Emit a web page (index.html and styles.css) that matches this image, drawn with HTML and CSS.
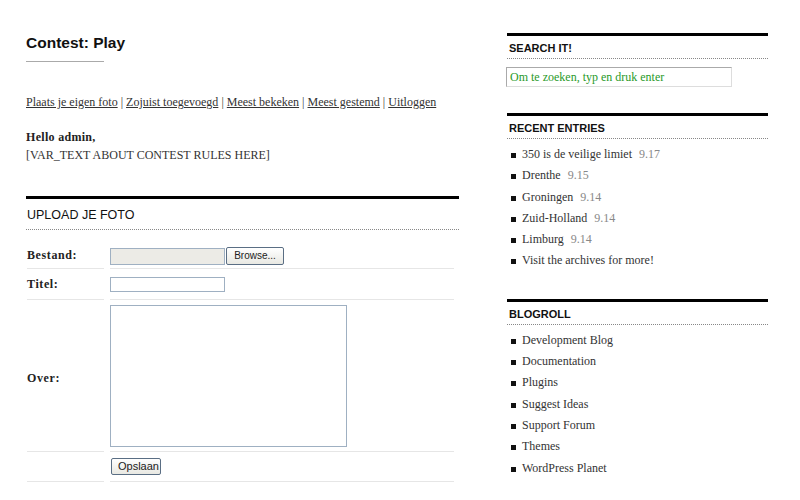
FILE: index.html
```html
<!DOCTYPE html>
<html>
<head>
<meta charset="utf-8">
<link rel="stylesheet" href="styles.css">
</head>
<body>
<div class="page">
  <main class="content">
    <h1 class="title">Contest: Play</h1>
    <p class="nav"><a href="#">Plaats je eigen foto</a> | <a href="#">Zojuist toegevoegd</a> | <a href="#">Meest bekeken</a> | <a href="#">Meest gestemd</a> | <a href="#">Uitloggen</a></p>
    <p class="intro"><strong>Hello admin,</strong><br>[VAR_TEXT ABOUT CONTEST RULES HERE]</p>
    <section class="upload">
      <h2 class="boxhead">UPLOAD JE FOTO</h2>
      <table class="form">
        <tr class="r1"><th>Bestand:</th><td><span class="file"></span><span class="btn browse">Browse...</span></td></tr>
        <tr class="r2"><th>Titel:</th><td><span class="text"></span></td></tr>
        <tr class="r3"><th>Over:</th><td><span class="area"></span></td></tr>
        <tr class="r4"><th></th><td><span class="btn save">Opslaan</span></td></tr>
      </table>
    </section>
  </main>
  <aside class="sidebar">
    <section class="widget">
      <h2 class="boxhead">SEARCH IT!</h2>
      <div class="search">Om te zoeken, typ en druk enter</div>
    </section>
    <section class="widget">
      <h2 class="boxhead">RECENT ENTRIES</h2>
      <ul class="list">
        <li>350 is de veilige limiet <span class="date">9.17</span></li>
        <li>Drenthe <span class="date">9.15</span></li>
        <li>Groningen <span class="date">9.14</span></li>
        <li>Zuid-Holland <span class="date">9.14</span></li>
        <li>Limburg <span class="date">9.14</span></li>
        <li>Visit the archives for more!</li>
      </ul>
    </section>
    <section class="widget">
      <h2 class="boxhead">BLOGROLL</h2>
      <ul class="list">
        <li>Development Blog</li>
        <li>Documentation</li>
        <li>Plugins</li>
        <li>Suggest Ideas</li>
        <li>Support Forum</li>
        <li>Themes</li>
        <li>WordPress Planet</li>
      </ul>
    </section>
  </aside>
</div>
</body>
</html>
```

FILE: styles.css
```css
html, body { margin: 0; padding: 0; background: #fff; }
body {
  font-family: "Liberation Serif", "DejaVu Serif", serif;
  font-size: 12px;
  color: #333;
}
.page {
  display: flex;
  padding-left: 26px;
  gap: 48px;
}
.content { width: 433px; }
.sidebar { width: 261px; padding-top: 33px; }

.title {
  font-family: "Liberation Sans", Arial, sans-serif;
  font-size: 15.5px;
  font-weight: bold;
  color: #111;
  margin: 34px 0 0;
  padding-bottom: 9px;
  width: 78px;
  white-space: nowrap;
  border-bottom: 1px solid #aaa;
}
.nav { margin: 33px 0 0; line-height: 14px; }
.nav a { color: #333; }
.intro { margin: 19px 0 0; line-height: 18px; }
.intro strong { color: #222; letter-spacing: 0.3px; }

.upload { margin-top: 32px; }
.boxhead {
  font-family: "Liberation Sans", Arial, sans-serif;
  font-weight: bold;
  font-size: 11px;
  color: #111;
  margin: 0;
  border-top: 3px solid #000;
  border-bottom: 1px dotted #888;
  padding: 6px 2px 3px;
  line-height: 13px;
}
.upload .boxhead { font-size: 12.5px; font-weight: normal; padding: 9px 1px 7px; line-height: 14px; }

.form { border-collapse: separate; border-spacing: 6px 0; margin: 8px 0 0 -5px; width: 439px; }
.form th, .form td {
  box-sizing: border-box;
  padding: 0;
  border-bottom: 1px solid #e6e6e6;
  vertical-align: middle;
}
.form th {
  width: 77px; text-align: left;
  font-weight: bold; color: #222; font-size: 12px; letter-spacing: 0.6px;
  line-height: 14px;
}
.form span { display: inline-block; vertical-align: middle; box-sizing: border-box; }
.r1 > * { height: 31px; }
.r1 > th, .r1 > td { vertical-align: top; }
.r1 > th { padding-top: 10px; }
.r1 > td { padding-top: 9px; line-height: 14px; }
.r2 > * { height: 31px; }
.r3 > * { height: 152px; }
.r3 > th { padding-top: 5px; }
.r4 > * { height: 30px; }
.file { width: 115px; height: 17px; background: #ecebe6; border: 1px solid #9fb0c2; }
.text { width: 115px; height: 15px; border: 1px solid #9fb0c2; }
.area { width: 237px; height: 142px; border: 1px solid #9fb0c2; margin-top: 1px; }
.btn {
  font-family: "Liberation Sans", Arial, sans-serif;
  font-size: 10px; color: #222;
  border: 1px solid #5a6e84;
  border-radius: 2px;
  background: linear-gradient(#fff, #e8e8e2);
  line-height: 14px;
  padding: 0 6px;
}
.browse { width: 58px; height: 18px; margin-left: 1px; line-height: 16px; text-align: center; }
.save { width: 50px; height: 17px; margin-left: 1px; line-height: 15px; text-align: center; font-size: 11px; }

.widget + .widget { margin-top: 26px; }
.widget:nth-child(3) { margin-top: 27px; }
.search {
  margin: 8px 0 0 -1px;
  width: 226px; height: 20px; box-sizing: border-box;
  border: 1px solid #ddd; border-top-color: #aaa; border-left-color: #aaa;
  color: #2a9a2a; padding: 2px 3px; line-height: 15px;
}
.list { list-style: none; margin: 5px 0 0; padding: 0; }
.list li { position: relative; padding-left: 15px; line-height: 21.3px; color: #333; }
.list li::before {
  content: ""; position: absolute; left: 4px; top: 9px;
  width: 5px; height: 5px; background: #111;
}
.date { color: #888; margin-left: 4px; }
```
